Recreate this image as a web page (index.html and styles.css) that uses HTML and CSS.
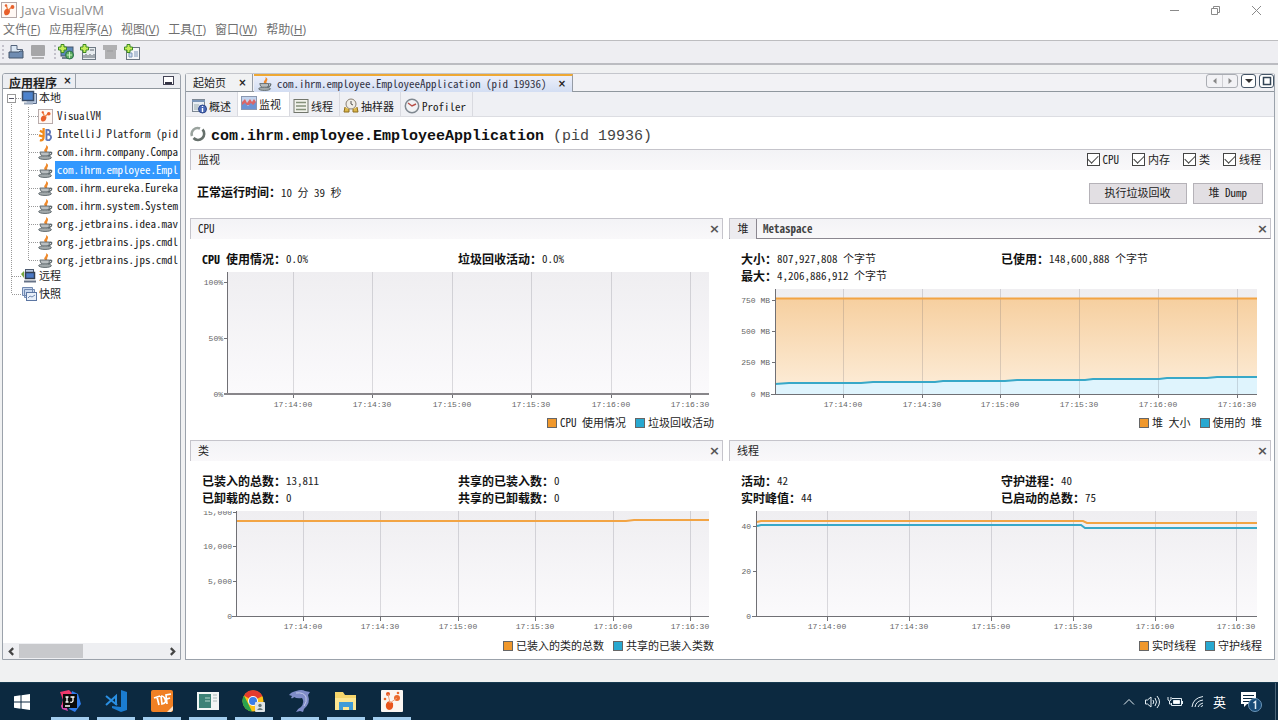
FILE: index.html
```html
<!DOCTYPE html>
<html lang="zh-CN">
<head>
<meta charset="utf-8">
<title>Java VisualVM</title>
<link rel="stylesheet" href="styles.css">
</head>
<body>
<svg class="defs" aria-hidden="true">
  <symbol id="vm" viewBox="0 0 16 16"><rect x=".5" y=".5" width="15" height="15" fill="#fff8f4" stroke="#b5a8a8"/><path d="M3 10q1-4 5-3 2 2 0 5-2 2-4 1-1-1-1-3z" fill="#e8602c"/><path d="M5 3l1.500 4M12 4L7.500 8" stroke="#ee8a50" stroke-width="1.500" fill="none"/><circle cx="5" cy="3.500" r="1.200" fill="#e8602c"/><circle cx="11.500" cy="5" r="1.900" fill="#e8602c"/></symbol>
  <symbol id="cup" viewBox="0 0 16 16"><path d="M8 8C4 5 10 4 8.500 0c5 3 0 4 1.500 8z" fill="#f08a2c"/><path d="M2 7.500h10v3q-5 4-9 0z" fill="#b9bec0" stroke="#5e686c"/><path d="M12 8q4-1 2 2l-3 2" fill="none" stroke="#5e686c" stroke-width="1.400"/><ellipse cx="7.500" cy="13.500" rx="6.800" ry="1.900" fill="#a3aaac" stroke="#5e686c"/></symbol>
  <symbol id="host" viewBox="0 0 16 16"><path d="M4 3.500h11.500v10H6" fill="#b9c8df" stroke="#5b6d8a"/><rect x="1.500" y="1.500" width="11" height="9" fill="#4c82cc" stroke="#3a4c66" stroke-width="1.500"/><path d="M3 12.500h9v2H3z" fill="#9aa8bc"/></symbol>
  <symbol id="plus" viewBox="0 0 9 9"><path d="M3 .5h3V3h2.500v3H6v2.500H3V6H.5V3H3z" fill="#c6ee5a" stroke="#3c8a22"/></symbol>
</svg>
<div class="app">
  <header class="titlebar">
    <svg class="logo"><use href="#vm"/></svg>
    <h1>Java VisualVM</h1>
    <div class="winctl">
      <button aria-label="最小化"><svg viewBox="0 0 11 11"><path d="M1 5.500h9"/></svg></button>
      <button aria-label="还原"><svg viewBox="0 0 11 11"><path d="M1.500 3.500h6v6h-6zM3.500 3.500v-2h6v6h-2"/></svg></button>
      <button aria-label="关闭"><svg viewBox="0 0 11 11"><path d="M1 1l9 9M10 1l-9 9"/></svg></button>
    </div>
  </header>
  <nav class="menubar">
    <button>文件(<u>F</u>)</button><button>应用程序(<u>A</u>)</button><button>视图(<u>V</u>)</button><button>工具(<u>T</u>)</button><button>窗口(<u>W</u>)</button><button>帮助(<u>H</u>)</button>
  </nav>
  <div class="toolbar">
    <i class="grip"></i>
    <button aria-label="打开"><svg viewBox="0 0 16 16"><path d="M3 1.500h6v4h5.500v7H3z" fill="#dbe7f4" stroke="#56657c"/><path d="M1 8h10l1-1h3v7H1z" fill="#6f8cb2" stroke="#45546b"/></svg></button>
    <button aria-label="保存"><svg viewBox="0 0 16 16"><rect x="1" y="1" width="14" height="11" rx="1" fill="#a6a6a8"/><path d="M2 13h12v2H2z" fill="#b0b0b2"/></svg></button>
    <i class="grip"></i>
    <button aria-label="添加 JMX 连接"><svg viewBox="0 0 16 16"><rect x="3" y="3" width="12" height="9" fill="#5a88b8" stroke="#46566b"/><path d="M4 14h9" stroke="#71808e" stroke-width="2"/><circle cx="11.500" cy="11" r="4" fill="#5fae62" stroke="#2d7150"/><path d="M9 11h5M11.500 8v6" stroke="#c9f0c4"/><use href="#plus" width="9" height="9"/></svg></button>
    <button aria-label="添加远程主机"><svg viewBox="0 0 16 16"><rect x="2.500" y="3.500" width="13" height="12" fill="#e8ecef" stroke="#6d7883"/><path d="M4 14v-3M6 14v-4M8 14v-3M10 14v-4M12 14v-3M14 14v-4M10 6h4" stroke="#59636c"/><use href="#plus" width="9" height="9"/></svg></button>
    <button aria-label="添加转储"><svg viewBox="0 0 16 16"><path d="M1 1h14v5h-1v9H3V6H1z" fill="#b0b0b2"/><path d="M5 7h6" stroke="#9b9b9d"/></svg></button>
    <button aria-label="添加快照"><svg viewBox="0 0 16 16"><rect x="2.500" y="3.500" width="13" height="12" fill="#f4f6f8" stroke="#6a7682"/><path d="M5 9h3v4H5zM10 8h4M10 10h4M10 12h4" stroke="#7d97b8" fill="#cddcf0"/><use href="#plus" width="9" height="9"/></svg></button>
  </div>

  <div class="workspace">
    <aside class="side">
      <div class="side-head"><h2>应用程序</h2><button class="x" aria-label="关闭">×</button><button class="mini" aria-label="最小化"><i></i></button></div>
      <ul class="tree">
        <li>
          <div class="node"><button class="exp" aria-label="折叠"></button><i class="dots"></i><svg><use href="#host"/></svg><span>本地</span></div>
          <ul class="kids">
            <li class="node"><svg><use href="#vm"/></svg><span>VisualVM</span></li>
            <li class="node"><svg viewBox="0 0 16 16"><path d="M6 1v9q0 5-4 4M2 4l4 2M1 9l4 1" fill="none" stroke="#f08a1c" stroke-width="2.400"/><path d="M9 2v12M8 3h3q4 2 0 5h-2 3q4 3 0 6h-3" fill="none" stroke="#6078b8" stroke-width="2"/></svg><span>IntelliJ Platform (pid</span></li>
            <li class="node"><svg><use href="#cup"/></svg><span>com.ihrm.company.Compa</span></li>
            <li class="node sel"><svg><use href="#cup"/></svg><span>com.ihrm.employee.Empl</span></li>
            <li class="node"><svg><use href="#cup"/></svg><span>com.ihrm.eureka.Eureka</span></li>
            <li class="node"><svg><use href="#cup"/></svg><span>com.ihrm.system.System</span></li>
            <li class="node"><svg><use href="#cup"/></svg><span>org.jetbrains.idea.mav</span></li>
            <li class="node"><svg><use href="#cup"/></svg><span>org.jetbrains.jps.cmdl</span></li>
            <li class="node"><svg><use href="#cup"/></svg><span>org.jetbrains.jps.cmdl</span></li>
          </ul>
        </li>
        <li class="node leaf"><i class="dots"></i><svg viewBox="0 0 16 16"><path d="M0 6l3-3v7z" fill="#77a83c"/><rect x="4.500" y="1.500" width="8" height="8" fill="#b9c8df" stroke="#4c5a70"/><rect x="4.500" y="4.500" width="9" height="6" fill="#4a78c4" stroke="#333f52" stroke-width="1.500"/><path d="M3 13.500h12" stroke="#667287" stroke-width="2"/></svg><span>远程</span></li>
        <li class="node leaf"><i class="dots"></i><svg viewBox="0 0 16 16"><path d="M1.500 1.500h10v8h-10zM3.500 3.500h10v8h-10z" fill="#c9d8ee" stroke="#7088b0"/><rect x="5.500" y="6.500" width="10" height="8" fill="#e8eff9" stroke="#5c76a2"/><path d="M7 12l2-2 2 1 3-2" fill="none" stroke="#7088b0"/></svg><span>快照</span></li>
      </ul>
      <div class="hscroll"><button aria-label="向左"><svg viewBox="0 0 8 8"><path d="M5.500 1L2.500 4l3 3"/></svg></button><i class="track"><i class="thumb"></i></i><button aria-label="向右"><svg viewBox="0 0 8 8"><path d="M2.500 1l3 3-3 3"/></svg></button></div>
    </aside>

    <main class="doc">
      <div class="tabs">
        <div class="tab"><span>起始页</span><button class="x" aria-label="关闭">×</button></div>
        <div class="tab on"><svg><use href="#cup"/></svg><span>com.ihrm.employee.EmployeeApplication (pid 19936)</span><button class="x" aria-label="关闭">×</button></div>
        <div class="tabctl">
          <span class="pair"><button aria-label="上一个"><svg viewBox="0 0 8 8"><path d="M5.500 1v6L2 4z"/></svg></button><button aria-label="下一个"><svg viewBox="0 0 8 8"><path d="M2.500 1v6L6 4z"/></svg></button></span>
          <button class="box" aria-label="列表"><svg viewBox="0 0 10 10"><path d="M1 3h8L5 7z"/></svg></button>
          <button class="box" aria-label="最大化"><svg viewBox="0 0 10 10"><path d="M1.500 1.500h7v7h-7z" class="ol"/></svg></button>
        </div>
      </div>
      <div class="subtabs">
        <button><svg viewBox="0 0 16 16"><rect x="1.500" y="1.500" width="12" height="12" fill="#e9eef3" stroke="#7d8893"/><path d="M1 3h13" stroke="#7b96b8" stroke-width="2"/><path d="M3 7h5M3 9h4M3 11h4" stroke="#9aa"/><circle cx="11.500" cy="11" r="4" fill="#4a69b8" stroke="#2c4688"/><path d="M11.500 10v4M11.500 8v1" stroke="#fff" stroke-width="1.400"/></svg><span>概述</span></button>
        <button class="on"><svg viewBox="0 0 16 16"><rect x=".5" y=".5" width="15" height="13" fill="#c3d4ee" stroke="#8b98b0"/><path d="M1 6l3-3 2 4 3-4 2 3 2-3 2 3v3H1z" fill="#dc6666"/><path d="M1 9l3-2 3 3 3-3 2 2 3-3v7H1z" fill="#6c94d4"/></svg><span>监视</span></button>
        <button><svg viewBox="0 0 16 16"><rect x="1" y="1.500" width="14" height="13" fill="#f2f3ec" stroke="#72766c"/><path d="M3 4.500h10M3 8h10M3 11.500h10" stroke="#85917a" stroke-width="1.400"/></svg><span>线程</span></button>
        <button><svg viewBox="0 0 16 16"><circle cx="8" cy="6" r="5" fill="#f0eee8" stroke="#887f72"/><path d="M8 3v3l2 1" fill="none" stroke="#555"/><path d="M2 9l-1 5h5v-3M14 9l1 5h-5v-3" fill="#dcb84c" stroke="#8d6c1c"/></svg><span>抽样器</span></button>
        <button><svg viewBox="0 0 16 16"><circle cx="8" cy="8" r="6.700" fill="#f1f3f5" stroke="#7f8890" stroke-width="1.500"/><path d="M4 5l4 3 4-2" fill="none" stroke="#b85048" stroke-width="1.400"/></svg><span>Profiler</span></button>
      </div>

      <div class="view">
        <div class="heading"><svg viewBox="0 0 16 16"><path d="M2 10a6 6 0 0 1 8-7.500" fill="none" stroke="#9aa39e" stroke-width="2.600"/><path d="M12.500 3.500a6 6 0 0 1-9 8.500" fill="none" stroke="#66706b" stroke-width="2.600"/></svg><h2>com.ihrm.employee.EmployeeApplication <small>(pid 19936)</small></h2></div>
        <div class="bar"><span>监视</span>
          <div class="checks"><label><input type="checkbox" checked>CPU</label><label><input type="checkbox" checked>内存</label><label><input type="checkbox" checked>类</label><label><input type="checkbox" checked>线程</label></div>
        </div>
        <div class="uptime"><p><b>正常运行时间：</b>10 分 39 秒</p><div class="acts"><button>执行垃圾回收</button><button>堆 Dump</button></div></div>

        <div class="panels">
          <section class="panel">
            <div class="bar"><span>CPU</span><button class="px" aria-label="关闭">×</button></div>
            <dl class="stats"><div><dt>CPU 使用情况：</dt><dd>0.0%</dd></div><div><dt>垃圾回收活动：</dt><dd>0.0%</dd></div></dl>
            <svg class="chart" viewBox="0 0 533 144">
              <rect x="37" y="4" width="482" height="122" fill="url(#plain)"/>
              <path class="gl" d="M103.500 4v122M182.500 4v122M262.500 4v122M341.500 4v122M421.500 4v122M500.500 4v122"/>
              <path class="ax" d="M37.500 4v122M34 14.500h3M34 70.500h3M103.500 126v4M182.500 126v4M262.500 126v4M341.500 126v4M421.500 126v4M500.500 126v4"/>
              <path class="ax base" d="M34 126H519"/>
              <g class="yl"><text x="33" y="17">100%</text><text x="33" y="73">50%</text><text x="33" y="129">0%</text></g>
              <g class="xl"><text x="103" y="139">17:14:00</text><text x="182" y="139">17:14:30</text><text x="262" y="139">17:15:00</text><text x="341" y="139">17:15:30</text><text x="421" y="139">17:16:00</text><text x="500" y="139">17:16:30</text></g>
            </svg>
            <div class="legend"><span><i class="or"></i>CPU 使用情况</span><span><i class="bl"></i>垃圾回收活动</span></div>
          </section>

          <section class="panel">
            <div class="bar tabbed"><button class="ht on">堆</button><button class="ht">Metaspace</button><button class="px" aria-label="关闭">×</button></div>
            <dl class="stats wide"><div><dt>大小：</dt><dd>807,927,808 个字节</dd></div><div><dt>已使用：</dt><dd>148,600,888 个字节</dd></div><div><dt>最大：</dt><dd>4,206,886,912 个字节</dd></div></dl>
            <svg class="chart" viewBox="0 0 542 127">
              <defs>
                <linearGradient id="plain" x2="0" y2="1"><stop stop-color="#efeef1"/><stop offset="1" stop-color="#fbfafc"/></linearGradient>
                <linearGradient id="orange" x2="0" y2="1"><stop stop-color="#f6cf9f"/><stop offset="1" stop-color="#fdeedb"/></linearGradient>
              </defs>
              <rect x="46" y="4" width="482" height="105" fill="url(#plain)"/>
              <rect x="46" y="13" width="482" height="96" fill="url(#orange)"/>
              <path d="M46 99l14-1h72l12-1h62l8-1h62l12-1h68l8-1h66l8-1h40l10-1h40v17H46z" fill="#dff4fd"/>
              <path class="gl" d="M114.500 4v105M193.500 4v105M271.500 4v105M350.500 4v105M429.500 4v105M508.500 4v105"/>
              <path class="lo" d="M46 13.500H528"/>
              <path class="lb" d="M46 99l14-1h72l12-1h62l8-1h62l12-1h68l8-1h66l8-1h40l10-1h40"/>
              <path class="ax" d="M46.500 4v105M43 15.500h3M43 46.500h3M43 77.500h3M42 109.500H528M114.500 109v4M193.500 109v4M271.500 109v4M350.500 109v4M429.500 109v4M508.500 109v4"/>
              <g class="yl"><text x="41" y="18">750 MB</text><text x="41" y="49">500 MB</text><text x="41" y="80">250 MB</text><text x="41" y="112">0 MB</text></g>
              <g class="xl"><text x="114" y="122">17:14:00</text><text x="193" y="122">17:14:30</text><text x="271" y="122">17:15:00</text><text x="350" y="122">17:15:30</text><text x="429" y="122">17:16:00</text><text x="508" y="122">17:16:30</text></g>
            </svg>
            <div class="legend"><span><i class="or"></i>堆 大小</span><span><i class="bl"></i>使用的 堆</span></div>
          </section>

          <section class="panel">
            <div class="bar"><span>类</span><button class="px" aria-label="关闭">×</button></div>
            <dl class="stats"><div><dt>已装入的总数：</dt><dd>13,811</dd></div><div><dt>共享的已装入数：</dt><dd>0</dd></div><div><dt>已卸载的总数：</dt><dd>0</dd></div><div><dt>共享的已卸载数：</dt><dd>0</dd></div></dl>
            <svg class="chart" viewBox="0 0 533 128">
              <clipPath id="low"><path d="M0 4h533v124H0z"/></clipPath>
              <rect x="46" y="4" width="473" height="106" fill="url(#plain)"/>
              <path class="gl" d="M113.500 4v106M190.500 4v106M268.500 4v106M345.500 4v106M423.500 4v106M500.500 4v106"/>
              <path class="lo" d="M47 14H436l8-1H519"/>
              <path class="ax" d="M46.500 4v106M43 5.500h3M43 39.500h3M43 74.500h3M42 109.500H519M113.500 110v4M190.500 110v4M268.500 110v4M345.500 110v4M423.500 110v4M500.500 110v4"/>
              <g class="yl" clip-path="url(#low)"><text x="42" y="8">15,000</text><text x="42" y="42">10,000</text><text x="42" y="77">5,000</text><text x="42" y="112">0</text></g>
              <g class="xl"><text x="113" y="122">17:14:00</text><text x="190" y="122">17:14:30</text><text x="268" y="122">17:15:00</text><text x="345" y="122">17:15:30</text><text x="423" y="122">17:16:00</text><text x="500" y="122">17:16:30</text></g>
            </svg>
            <div class="legend"><span><i class="or"></i>已装入的类的总数</span><span><i class="bl"></i>共享的已装入类数</span></div>
          </section>

          <section class="panel">
            <div class="bar"><span>线程</span><button class="px" aria-label="关闭">×</button></div>
            <dl class="stats wide"><div><dt>活动：</dt><dd>42</dd></div><div><dt>守护进程：</dt><dd>40</dd></div><div><dt>实时峰值：</dt><dd>44</dd></div><div><dt>已启动的总数：</dt><dd>75</dd></div></dl>
            <svg class="chart" viewBox="0 0 542 128">
              <rect x="27" y="4" width="501" height="106" fill="url(#plain)"/>
              <path class="gl" d="M98.500 4v106M180.500 4v106M262.500 4v106M344.500 4v106M426.500 4v106M507.500 4v106"/>
              <path class="lo" d="M28 15l4-1H354l4 2H528"/>
              <path class="lb" d="M28 19l4-1H352l4 3H528"/>
              <path class="ax" d="M27.500 4v106M24 19.500h3M24 64.500h3M23 109.500H528M98.500 110v4M180.500 110v4M262.500 110v4M344.500 110v4M426.500 110v4M507.500 110v4"/>
              <g class="yl"><text x="22" y="22">40</text><text x="22" y="67">20</text><text x="22" y="112">0</text></g>
              <g class="xl"><text x="98" y="122">17:14:00</text><text x="180" y="122">17:14:30</text><text x="262" y="122">17:15:00</text><text x="344" y="122">17:15:30</text><text x="426" y="122">17:16:00</text><text x="507" y="122">17:16:30</text></g>
            </svg>
            <div class="legend"><span><i class="or"></i>实时线程</span><span><i class="bl"></i>守护线程</span></div>
          </section>
        </div>
      </div>
    </main>
  </div>
</div>

<footer class="taskbar">
  <button class="start" aria-label="开始"><svg viewBox="0 0 16 16"><path d="M0 2.300l6.500-1v6.200H0zM7.500 1.200L16 0v7.500H7.500zM0 8.500h6.500v6.200l-6.500-1zM7.500 8.500H16V16l-8.500-1.200z" fill="#fff"/></svg></button>
  <button class="run" aria-label="IntelliJ IDEA"><svg viewBox="0 0 24 24"><path d="M2 3l9-2 5 5-8 14-5-2 2-7z" fill="#f0386b"/><path d="M14 2l6 3 3 10-6 8-6-3z" fill="#2f7bea"/><path d="M3 16l5 1 2 5-6-2z" fill="#d64ab0"/><path d="M5 5h14v14H5z" fill="#0a0a0a"/><path d="M7.500 8h3M9 8v5M7.500 13h3M12.500 8h4M15 8v4q-1 2-3 1M7 17h5" fill="none" stroke="#fff" stroke-width="1.300"/></svg></button>
  <button class="run" aria-label="VS Code"><svg viewBox="0 0 24 24"><path d="M17 1l6 2v18l-6 2-9-4v-2l9 1z" fill="#1b7cd0"/><path d="M2 7l11 9M2 16l10-9v9" fill="none" stroke="#2a8fe2" stroke-width="2"/></svg></button>
  <button class="run" aria-label="PDF"><svg viewBox="0 0 24 24"><rect x="1" y="1" width="22" height="22" rx="2" fill="#f08024"/><path d="M4 9l6-2M7 8l2 8M11 7l1 8q5-1 3-5-1-3-4-3M17 15l-1-9 5-1M17 10l3-1" fill="none" stroke="#fff" stroke-width="1.700"/><path d="M17 23l6-6v4l-2 2z" fill="#fde3c8"/></svg></button>
  <button class="run" aria-label="应用窗口"><svg viewBox="0 0 24 24"><rect x="1" y="3" width="22" height="18" fill="#f1f5f4"/><rect x="3" y="5" width="12" height="14" fill="#3d8277"/><path d="M9 9h5M9 12h5" stroke="#b8dad0"/><path d="M17 6h4M17 9h4M17 12h4" stroke="#a8b8b8"/></svg></button>
  <button class="run" aria-label="Chrome"><svg viewBox="0 0 24 24"><circle cx="11" cy="12" r="10.500" fill="#fbc116"/><path d="M11 12L2 6.500a10.500 10.500 0 0 1 18.500.5z" fill="#e33b2e"/><path d="M2 6.500L10 22.500A10.500 10.500 0 0 1 2 6.500l6 7z" fill="#2ba24c"/><circle cx="11" cy="12" r="5" fill="#fff"/><circle cx="11" cy="12" r="4" fill="#3b7de8"/><rect x="13" y="13" width="10" height="10" rx="1" fill="#dfe4e6"/><circle cx="18" cy="16.500" r="1.700" fill="#677"/><path d="M15 21q3-4 6 0z" fill="#677"/></svg></button>
  <button class="run" aria-label="海豚"><svg viewBox="0 0 24 24"><path d="M1 6q2-3 7-4 6-2 9 0l5 1-2 3q3 8-4 14l-1 3-3-1-4 1q1-3 5-5 4-5 1-9-5 1-8-1-1 2-3 1l1-2z" fill="#7f8cc8"/><path d="M8 4q8-1 10 4 1 5-2 9" fill="none" stroke="#c3c9ea"/></svg></button>
  <button class="run" aria-label="文件资源管理器"><svg viewBox="0 0 24 24"><path d="M1 3h8l2 3h11v15H1z" fill="#f5d56c"/><path d="M1 9h21v12H1z" fill="#fde692"/><path d="M5 21v-8h14v8h-4v-3H9v3z" fill="#3f9bd8"/></svg></button>
  <button class="run" aria-label="Java VisualVM"><svg viewBox="0 0 24 24"><rect x="1" y="1" width="22" height="22" rx="1" fill="#fbf6f2"/><path d="M6 15q2-5 7-1 1 7-4 7-4-1-3-6z" fill="#e8541c"/><circle cx="8" cy="5" r="2" fill="#e8541c"/><circle cx="17" cy="9" r="3" fill="#ea6a2c"/><circle cx="5" cy="10" r="1.300" fill="#ea6a2c"/><circle cx="18" cy="4" r="1.300" fill="#ea6a2c"/><path d="M8 5l2 9 7-5" fill="none" stroke="#f2a27c"/></svg></button>
  <div class="tray">
    <svg viewBox="0 0 16 16"><path d="M3 10.500l5-5 5 5"/></svg>
    <svg viewBox="0 0 16 16"><path d="M1.500 6v4h2l3.500 3V3L3.500 6zM9 6q1.500 2 0 4M11 4q3 4 0 8M13 2q5 6 0 12"/></svg>
    <svg viewBox="0 0 16 16"><path d="M5 4.500h9.500v7H4.500V9M15.500 7v3M1 3v3q1.500 2 3 0V3M2.500 7v3h2"/><path d="M6.500 6.500h6v3h-6z" fill="#fff"/></svg>
    <svg viewBox="0 0 16 16"><path d="M2 13Q3 4 13 2.500M5 13q1-6 8-7M8 13q1-3 5-4M11 13q0-1 2-1.500"/></svg>
    <span>英</span>
    <svg class="note" viewBox="0 0 24 24"><path d="M2 2h15v12H8l-3 3v-3H2z" fill="#fff" stroke="none"/><path d="M4 5.500h11M4 8.500h11M4 11.500h7" stroke="#0c2940"/><circle cx="16" cy="15" r="6.500" fill="#164a76" stroke="#6b95b8"/><path d="M14.500 13l2-1.500V19" stroke-width="1.500"/></svg>
  </div>
</footer>
</body>
</html>
```
FILE: styles.css
```css
* { box-sizing: border-box; }
body {
  margin: 0;
  min-height: 100vh;
  display: flex;
  flex-direction: column;
  background: #f0f1f2;
  color: #222;
  font: 11px/17px "Noto Sans Mono CJK SC", "Liberation Mono", "Noto Sans CJK SC", monospace;
}
button { margin: 0; padding: 0; border: 0; background: none; color: inherit; font: inherit; }
h1, h2, ul, dl, dd, p { margin: 0; padding: 0; font: inherit; list-style: none; }
svg { flex: none; display: block; }
i { display: block; flex: none; }
.defs { position: absolute; width: 0; height: 0; }
.app { flex: 1; display: flex; flex-direction: column; }

.titlebar { display: flex; align-items: center; height: 20px; padding-left: 1px; gap: 4px; background: #fff; color: #8c8c8c; }
.titlebar h1 { font: 13px/20px "Open Sans", sans-serif; }
.logo { width: 16px; height: 16px; }
.winctl { margin-left: auto; display: flex; padding-right: 1px; }
.winctl button { width: 41px; height: 20px; display: grid; place-items: center; }
.winctl svg { width: 11px; height: 11px; fill: none; stroke: #8a8a8a; }
.menubar { display: flex; gap: 9px; height: 20px; padding-left: 3px; background: #fff; color: #6f6f6f; font: 12px/20px "Open Sans", "Noto Sans CJK SC", sans-serif; }
.toolbar { display: flex; align-items: center; gap: 6px; height: 25px; padding-left: 2px; border-top: 1px solid #bdbdc0; border-bottom: 2px solid #bbbcc1; background: #eeeef2; }
.toolbar svg { width: 16px; height: 16px; }
.grip { width: 2px; height: 14px; margin-right: -2px; border-left: 2px dotted #c3c1cb; }
.toolbar button + .grip { margin-left: 2px; margin-right: -4px; }

.workspace { flex: 1; display: flex; gap: 4px; padding: 8px 3px 0 2px; margin-bottom: 22px; }
.side { width: 179px; flex: none; display: flex; flex-direction: column; border: 1px solid #9ba2ab; border-radius: 3px 3px 0 0; background: #fff; overflow: hidden; }
.side-head { display: flex; height: 15px; border-bottom: 1px solid #8f979e; background: #eceef2; }
.side-head h2 { padding-left: 6px; font: bold 12px/17px "Noto Sans CJK SC", sans-serif; }
.x { width: 19px; color: #222; font: bold 10px/14px "DejaVu Sans", sans-serif; }
.side-head .x { padding-left: 3px; border-right: 1px solid #9ba2ab; }
.mini { margin: 2px 6px 0 auto; width: 11px; height: 9px; border: 1px solid #445; background: #fff; }
.mini i { margin: 4px 1px 0; height: 2px; background: #334; }

.tree { position: relative; flex: 1; padding-left: 4px; color: #222; }
.tree::before { content: ""; position: absolute; left: 8px; top: 13px; height: 191px; border-left: 1px dotted #999; }
.node { display: flex; align-items: center; height: 18px; white-space: nowrap; }
.node svg { width: 16px; height: 16px; margin-right: 2px; }
.node span { line-height: 16px; padding-bottom: 2px; }
.exp { width: 9px; height: 9px; border: 1px solid #999; background: linear-gradient(#556, #556) center / 5px 1px no-repeat #fff; z-index: 1; }
.dots { width: 5px; border-top: 1px dotted #999; }
.leaf .dots { width: 9px; margin-left: 5px; }
.kids { margin-left: 21px; border-left: 1px dotted #999; height: 153px; margin-bottom: 7px; }
.kids .node::before { content: ""; flex: none; width: 9px; border-top: 1px dotted #999; }
.kids .node svg { width: 15px; height: 15px; margin-right: 2px; }
.kids .node span { flex: 1; padding-left: 2px; }
.sel span { background: #3298fe; color: #fff; }
.hscroll { display: flex; height: 16px; background: #eeeff2; }
.hscroll button { width: 16px; display: grid; place-items: center; }
.hscroll svg { width: 9px; height: 9px; fill: none; stroke: #444; stroke-width: 2; }
.track { flex: 1; }
.thumb { width: 44%; height: 14px; margin-top: 1px; background: #c8c9cc; }

.doc { flex: 1; min-width: 0; border: 1px solid #9ba2ab; border-top-color: #c4c6cc; border-radius: 3px 3px 0 0; background: #fff; }
.tabs { display: flex; height: 18px; border-bottom: 1px solid #8f979e; background: #f2f2f5; }
.tab { display: flex; align-items: center; height: 17px; padding-left: 7px; border-right: 1px solid #969ca5; background: #f1f2f3; }
.tab .x { margin-left: 7px; }
.tab .x, .tab span { line-height: 17px; }
.tab.on { height: 18px; padding-left: 4px; margin-left: 1px; border-top: 2px solid #eea834; background: linear-gradient(#eceffa, #d3def3); color: #334; }
.tab.on span { line-height: 14px; padding-bottom: 2px; }
.tab.on .x { line-height: 14px; margin-left: 6px; }
.tab.on svg { width: 14px; height: 14px; margin-right: 5px; }
.tabctl { margin-left: auto; display: flex; align-items: center; gap: 3px; padding-bottom: 4px; }
.pair { display: flex; border: 1px solid #aaadb3; border-radius: 3px; }
.pair button { width: 15px; height: 12px; display: grid; place-items: center; }
.pair button + button { border-left: 1px solid #d0d0d4; }
.pair svg { width: 8px; height: 8px; fill: #888; }
.box { width: 15px; height: 14px; display: grid; place-items: center; border: 1px solid #445566; border-radius: 3px; background: #fff; }
.box svg { width: 10px; height: 10px; fill: #333; }
.box .ol { fill: none; stroke: #345; stroke-width: 1.5; }
.subtabs { display: flex; height: 25px; border-bottom: 1px solid #dcdde2; background: #eff0f4; padding-left: 2px; }
.subtabs button { display: flex; align-items: center; gap: 2px; height: 24px; padding: 5px 6px 0 3px; border-right: 1px solid #d9dae0; }
.subtabs .on { background: #fff; padding-top: 1px; padding-right: 8px; }
.subtabs svg { width: 16px; height: 16px; margin-top: -2px; }

.view { padding: 9px 3px 0 4px; }
.heading { display: flex; gap: 5px; height: 23px; }
.heading svg { width: 16px; height: 16px; }
.heading h2 { font: bold 15px/22px "Liberation Mono", monospace; color: #111; }
.heading small { font-size: 15px; font-weight: normal; color: #444; }
.bar { display: flex; align-items: center; height: 21px; padding: 0 8px 1px 7px; border: 1px solid #c5c4cb; border-bottom: 0; background: linear-gradient(#f3f3f6, #f9f8fa); }
.checks { margin-left: auto; display: flex; gap: 13px; padding-right: 1px; }
.checks label { display: flex; align-items: center; gap: 3px; }
.checks input { appearance: none; width: 13px; height: 13px; margin: 0; border: 1px solid #444; background: #fff; display: grid; place-items: center; }
.checks input:checked::before { content: ""; width: 9px; height: 5px; margin-bottom: 3px; border: solid #444; border-width: 0 0 1px 1px; rotate: -45deg; }
.uptime { display: flex; align-items: center; height: 48px; padding: 0 8px 2px 7px; }
.uptime p { padding-bottom: 2px; }
.acts { margin-left: auto; display: flex; gap: 6px; }
.acts button { height: 21px; padding: 0 15px 1px; border: 1px solid #b5b2b8; background: #e2dfe3; color: #222; }

.panels { display: grid; grid-template-columns: 533fr 542fr; gap: 6px; }
.panel { min-width: 0; }
.px { margin-left: auto; margin-right: -7px; width: 13px; color: #555; font: bold 13px/14px "DejaVu Sans", sans-serif; }
.tabbed { padding-left: 0; padding-bottom: 0; border-bottom: 1px solid #8b8790; }
.ht { height: 20px; padding: 0 6px; font-weight: bold; color: #444; }
.ht.on { width: 27px; padding: 0; border-right: 1px solid #8b8790; background: #ecebef; font-weight: normal; color: #222; }
.stats { display: grid; grid-template-columns: 256fr 265fr; padding: 11px 0 1px 12px; }
.stats.wide { grid-template-columns: 260fr 270fr; }
.stats div { display: flex; }
dt, b { font-size: 12px; font-weight: bold; color: #111; }
.chart { width: 100%; height: auto; }
.gl { fill: none; stroke: #555566; stroke-opacity: .2; }
.ax { fill: none; stroke: #707075; }
.base { stroke-width: 2; stroke: #88868a; }
.lo { fill: none; stroke: #f2a444; stroke-width: 2; }
.lb { fill: none; stroke: #38a8c8; stroke-width: 2; }
.chart text { font: 8px "Liberation Mono", monospace; fill: #666; }
.yl { text-anchor: end; }
.xl { text-anchor: middle; }
.legend { display: flex; justify-content: flex-end; gap: 9px; height: 22px; padding: 2px 9px 0 0; }
.legend span { display: flex; align-items: center; gap: 3px; height: 17px; }
.legend i { width: 10px; height: 10px; border: 1px solid #666; }
.or { background: #f0982c; }
.bl { background: #28a8d0; }

.taskbar { display: flex; height: 38px; background: #0c2940; border-top: 1px solid #173a50; }
.start { width: 43px; display: grid; place-items: center; margin-right: 8px; }
.start svg { width: 16px; height: 16px; }
.run { width: 38px; margin-right: 8px; display: grid; place-items: center; border-bottom: 3px solid #a3cdee; }
.run svg { width: 24px; height: 24px; margin-top: 2px; }
.tray { margin: 0 2px 0 auto; padding-right: 12px; display: flex; align-items: center; gap: 7px; border-right: 1px solid #4a6478; color: #fff; }
.tray svg { width: 16px; height: 16px; fill: none; stroke: #e4eef4; }
.tray .note { width: 24px; height: 24px; margin-left: 6px; }
.tray span { font: 13px/20px "Noto Sans CJK SC", sans-serif; }
```
